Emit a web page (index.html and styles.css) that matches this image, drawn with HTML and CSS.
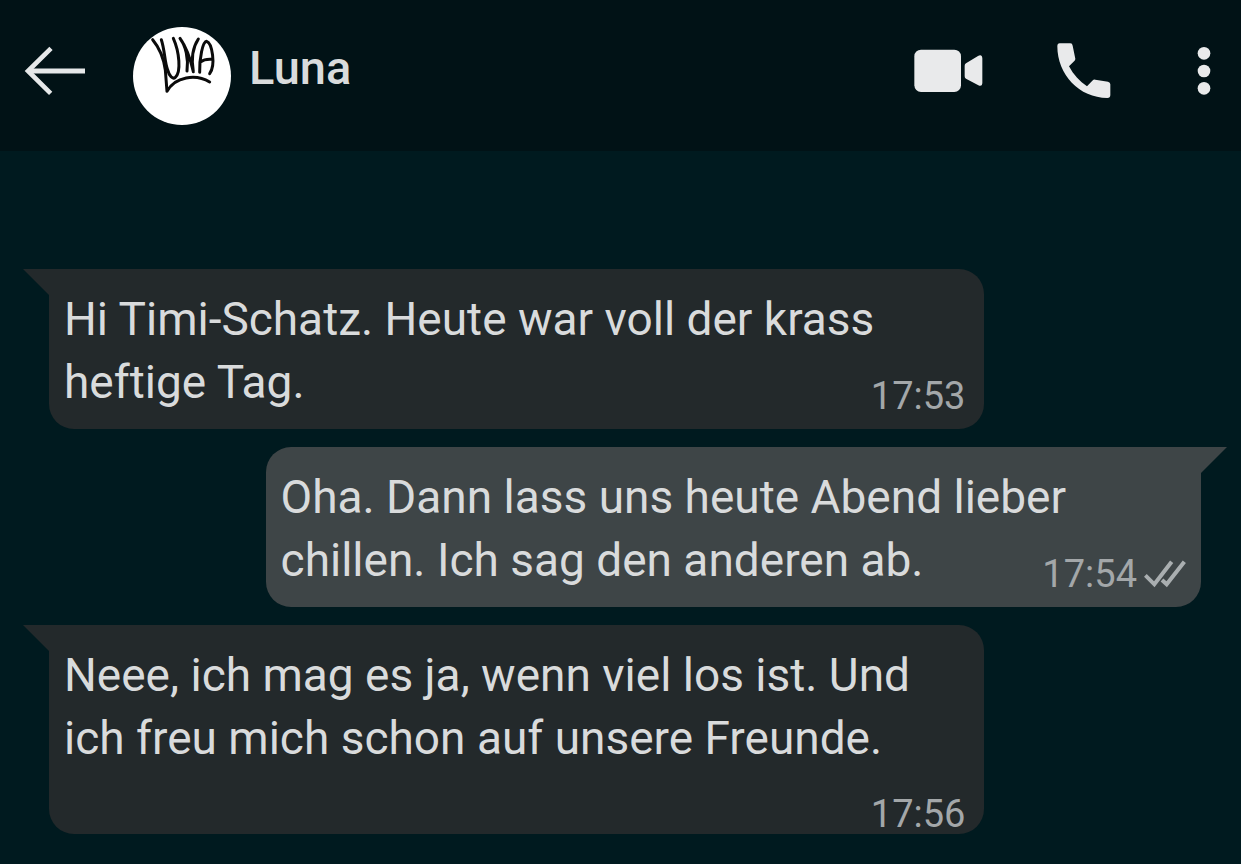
FILE: index.html
```html
<!DOCTYPE html>
<html lang="de">
<head>
<meta charset="utf-8">
<meta name="viewport" content="width=device-width, initial-scale=1">
<title>Luna</title>
<link rel="stylesheet" href="styles.css">
</head>
<body>
<header class="topbar">
  <button class="icon-btn back" type="button" aria-label="Zurück">
    <svg width="61" height="50" viewBox="74 75 183 150" fill="none" stroke="#e6e8e9" stroke-width="14"><path d="M257 150H88" stroke-width="15"/><path d="M155 82L86 150L154 217"/></svg>
  </button>
  <svg class="avatar" width="98" height="98" viewBox="39 36 294 294" role="img" aria-label="Profilbild">
    <circle cx="186" cy="183" r="147" fill="#fff"/>
    <g fill="none" stroke="#0b0b0b" stroke-width="9" stroke-linecap="round" stroke-linejoin="round">
      <path d="M98 74C118 98 132 135 136 165L141 229C165 184 228 176 269 201"/>
      <path d="M124 74C134 104 134 140 142 162C148 184 158 194 166 187C184 172 178 110 160 70"/>
      <path d="M201 168C206 130 197 92 180 70C196 92 211 130 220 170C213 130 219 96 235 72"/>
      <path d="M239 172C238 130 248 80 260 79C276 84 288 150 269 176M241 141C252 133 264 132 276 133"/>
    </g>
  </svg>
  <h1 class="name">Luna</h1>
  <nav class="actions" aria-label="Aktionen">
    <button class="icon-btn" type="button" aria-label="Videoanruf">
      <svg width="69" height="44" viewBox="73 89 207 132" fill="#e9eaeb"><rect x="74" y="91" width="140" height="127" rx="20"/><path d="M229 132L265 110Q277 104 278 117V192Q277 203 266 198L229 178Q225 176 225 171V139Q225 134 229 132Z"/></svg>
    </button>
    <button class="icon-btn" type="button" aria-label="Anruf">
      <svg width="54" height="56" viewBox="503 65 162 168" fill="#e9eaeb"><path d="M511 66H543Q549 66 550 73L558 112Q558 116 555 119L539 135C552 160 571 180 593 195L609 178Q613 174 618 175L656 181Q663 183 663 189V221Q663 230 654 230C570 230 504 160 504 75Q504 66 511 66Z"/></svg>
    </button>
    <button class="icon-btn more" type="button" aria-label="Mehr">
      <svg width="14" height="50" viewBox="921 81 42 150" fill="#e9eaeb"><circle cx="942" cy="103" r="19"/><circle cx="942" cy="156" r="19"/><circle cx="942" cy="208" r="19"/></svg>
    </button>
  </nav>
</header>
<main class="chat">
  <article class="bubble in">
    <p class="text">Hi Timi-Schatz. Heute war voll der krass heftige Tag.</p>
    <div class="meta"><time>17:53</time></div>
  </article>
  <article class="bubble out">
    <p class="text">Oha. Dann lass uns heute Abend lieber chillen. Ich sag den anderen ab.</p>
    <div class="meta"><time>17:54</time>
      <svg class="checks" role="img" aria-label="Gelesen" width="42" height="28" viewBox="885 396 126 84" fill="none" stroke="#a9aeb0" stroke-width="12"><path d="M889 442L916 469L968 401"/><path d="M939 456L953 469L1006 401"/></svg>
    </div>
  </article>
  <article class="bubble in stacked">
    <p class="text">Neee, ich mag es ja, wenn viel los ist. Und ich freu mich schon auf unsere Freunde.</p>
    <div class="meta"><time>17:56</time></div>
  </article>
</main>
</body>
</html>
```
FILE: styles.css
```css
* {
  box-sizing: border-box;
}

body {
  margin: 0;
  min-height: 100vh;
  background: #001a1f;
  color: #d9dbdc;
  font-family: Roboto, "Liberation Sans", sans-serif;
}

.topbar {
  display: flex;
  align-items: center;
  padding: 17px 30px 26px 24px;
  background: #011216;
}

.icon-btn {
  display: block;
  padding: 0;
  border: 0;
  background: none;
  cursor: pointer;
}

.icon-btn svg {
  display: block;
}

.avatar {
  flex: none;
  margin: 10px 18px 0 48px;
}

.name {
  margin: 0;
  padding-bottom: 6px;
  color: #d9dbdc;
  font-size: 47px;
  font-weight: 500;
  line-height: 56px;
}

.actions {
  display: flex;
  align-items: center;
  gap: 74px;
  margin-left: auto;
}

.more {
  margin-left: 12px;
}

.chat {
  display: flex;
  flex-direction: column;
  gap: 18px;
  padding: 118px 40px 29px 49px;
}

.bubble {
  position: relative;
  display: grid;
  width: 81.2%;
  padding: 19px 15px 15px;
  border-radius: 25px;
}

.in {
  align-self: flex-start;
  border-top-left-radius: 0;
  background: #23292b;
}

.out {
  align-self: flex-end;
  border-top-right-radius: 0;
  background: #3e4547;
}

.bubble::before {
  content: "";
  position: absolute;
  top: 0;
  width: 26px;
  height: 26px;
  background: inherit;
}

.in::before {
  right: 100%;
  clip-path: polygon(0 0, 100% 0, 100% 100%);
}

.out::before {
  left: 100%;
  clip-path: polygon(0 0, 100% 0, 0 100%);
}

.text {
  grid-area: 1 / 1;
  margin: 0;
  font-size: 46px;
  line-height: 63px;
}

.meta {
  grid-area: 1 / 1;
  display: flex;
  align-items: center;
  align-self: end;
  justify-self: end;
  gap: 7px;
  color: #a3a7a9;
  font-size: 38px;
  line-height: 36px;
}

.in .meta {
  padding-right: 4px;
}

.stacked {
  row-gap: 26px;
  padding-bottom: 2px;
}

.stacked .meta {
  grid-row: 2;
}
```
